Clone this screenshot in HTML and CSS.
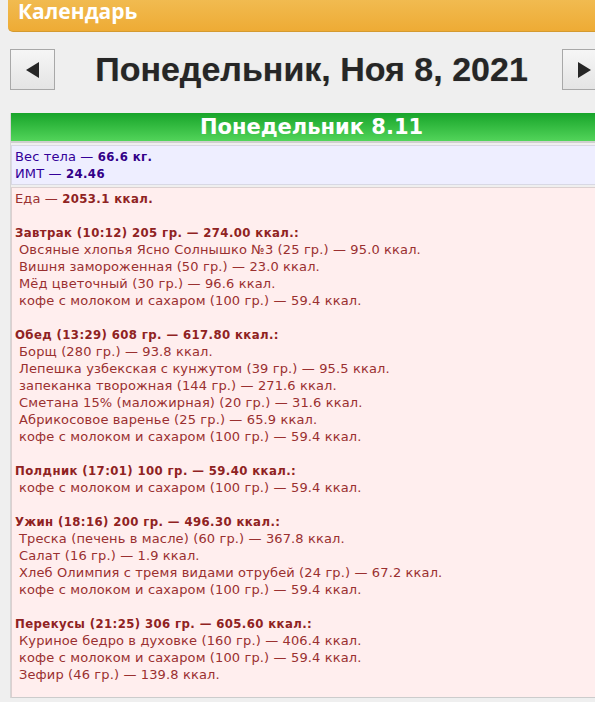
FILE: index.html
```html
<!DOCTYPE html>
<html lang="ru">
<head>
<meta charset="utf-8">
<title>Календарь</title>
<link rel="stylesheet" href="styles.css">
</head>
<body>
<div class="wrap">
  <div class="cal-head">
    <span class="cal-title">Календарь</span>
    <span class="cal-min"></span>
  </div>
  <div class="nav">
    <div class="nav-btn"><svg width="13" height="16" viewBox="0 0 13 16"><polygon points="13,0 13,16 0,8" fill="#262626"/></svg></div>
    <div class="nav-date">Понедельник, Ноя 8, 2021</div>
    <div class="nav-btn"><svg width="13" height="16" viewBox="0 0 13 16"><polygon points="0,0 0,16 13,8" fill="#262626"/></svg></div>
  </div>
  <div class="day">
    <div class="day-head">Понедельник 8.11</div>
    <div class="weight">
      <div>Вес тела — <b>66.6 кг.</b></div>
      <div>ИМТ — <b>24.46</b></div>
    </div>
    <div class="food">
      <div>Еда — <b>2053.1 ккал.</b></div>

      <div class="meal">
        <div class="meal-title">Завтрак (10:12) 205 гр. — 274.00 ккал.:</div>
        <div class="item">Овсяные хлопья Ясно Солнышко №3 (25 гр.) — 95.0 ккал.</div>
        <div class="item">Вишня замороженная (50 гр.) — 23.0 ккал.</div>
        <div class="item">Мёд цветочный (30 гр.) — 96.6 ккал.</div>
        <div class="item">кофе с молоком и сахаром (100 гр.) — 59.4 ккал.</div>
      </div>

      <div class="meal">
        <div class="meal-title">Обед (13:29) 608 гр. — 617.80 ккал.:</div>
        <div class="item">Борщ (280 гр.) — 93.8 ккал.</div>
        <div class="item">Лепешка узбекская с кунжутом (39 гр.) — 95.5 ккал.</div>
        <div class="item">запеканка творожная (144 гр.) — 271.6 ккал.</div>
        <div class="item">Сметана 15% (маложирная) (20 гр.) — 31.6 ккал.</div>
        <div class="item">Абрикосовое варенье (25 гр.) — 65.9 ккал.</div>
        <div class="item">кофе с молоком и сахаром (100 гр.) — 59.4 ккал.</div>
      </div>

      <div class="meal">
        <div class="meal-title">Полдник (17:01) 100 гр. — 59.40 ккал.:</div>
        <div class="item">кофе с молоком и сахаром (100 гр.) — 59.4 ккал.</div>
      </div>

      <div class="meal">
        <div class="meal-title">Ужин (18:16) 200 гр. — 496.30 ккал.:</div>
        <div class="item">Треска (печень в масле) (60 гр.) — 367.8 ккал.</div>
        <div class="item">Салат (16 гр.) — 1.9 ккал.</div>
        <div class="item">Хлеб Олимпия с тремя видами отрубей (24 гр.) — 67.2 ккал.</div>
        <div class="item">кофе с молоком и сахаром (100 гр.) — 59.4 ккал.</div>
      </div>

      <div class="meal">
        <div class="meal-title">Перекусы (21:25) 306 гр. — 605.60 ккал.:</div>
        <div class="item">Куриное бедро в духовке (160 гр.) — 406.4 ккал.</div>
        <div class="item">кофе с молоком и сахаром (100 гр.) — 59.4 ккал.</div>
        <div class="item">Зефир (46 гр.) — 139.8 ккал.</div>
      </div>
    </div>
  </div>
</div>
</body>
</html>
```
FILE: styles.css
```css
html, body {
  margin: 0;
  padding: 0;
  background: #efefef;
  overflow: hidden;
}

.wrap {
  width: 597px;
  padding-left: 10px;
}

.cal-head {
  margin-left: -2px;
  width: 620px;
  height: 32px;
  box-sizing: border-box;
  background: linear-gradient(#f1bb50, #eeab35);
  border-bottom: 1px solid #d49a30;
  border-bottom-left-radius: 5px;
  display: flex;
  align-items: flex-start;
  justify-content: space-between;
  font-family: "Open Sans", "Liberation Sans", sans-serif;
}

.cal-title {
  color: #fff;
  font-weight: bold;
  font-size: 21px;
  line-height: 22px;
  margin-left: 10px;
}

.cal-min {
  width: 10px;
  height: 3px;
  background: #fff;
  margin-top: 6px;
  margin-right: 17px;
}

.nav {
  display: flex;
  align-items: center;
  margin-top: 17px;
  height: 41px;
}

.nav-btn {
  width: 45px;
  height: 41px;
  box-sizing: border-box;
  border: 1px solid #a8a8a8;
  background: linear-gradient(#f6f6f6, #e4e4e4);
  display: flex;
  align-items: center;
  justify-content: center;
}

.nav-date {
  flex: 1;
  text-align: center;
  padding-left: 6px;
  font-family: "Liberation Sans", Arial, sans-serif;
  font-weight: bold;
  font-size: 34px;
  color: #262626;
  text-shadow: 0 0 1px rgba(0,0,0,0.3);
}

.day {
  margin-top: 23px;
  border-left: 1px solid #d6d6d6;
  font-family: "DejaVu Sans", sans-serif;
  font-size: 13px;
  line-height: 17px;
  letter-spacing: 0.13px;
}

.day-head {
  height: 30px;
  box-sizing: border-box;
  padding-left: 5px;
  background: linear-gradient(#18a42a, #52d45a);
  border-bottom: 2px solid #cfcfcf;
  color: #fff;
  font-family: "DejaVu Sans", sans-serif;
  font-weight: bold;
  font-size: 21px;
  line-height: 28px;
  letter-spacing: 0;
  text-align: center;
}

.weight {
  margin-top: 2px;
  background: #eeeeff;
  border: 1px solid #d8d8e4;
  padding: 2px 3px;
  color: #330099;
}

.weight b {
  font-family: "DejaVu Sans Condensed", "DejaVu Sans", sans-serif;
  letter-spacing: 0.4px;
  color: #330088;
}

.food {
  margin-top: 2px;
  background: #ffeeee;
  border: 1px solid #dcd0d0;
  border-bottom-color: #cccccc;
  padding: 2px 3px 14px;
  color: #9a3030;
}

.food b,
.meal-title {
  font-family: "DejaVu Sans Condensed", "DejaVu Sans", sans-serif;
  font-weight: bold;
  letter-spacing: 0.4px;
  color: #8f2222;
}

.meal {
  margin-top: 17px;
}

.item {
  padding-left: 4px;
}
```
